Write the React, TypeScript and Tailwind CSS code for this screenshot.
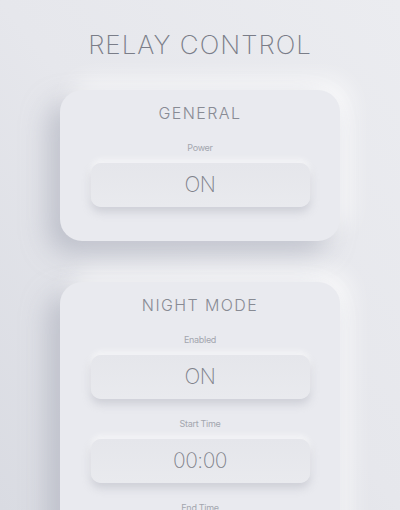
const fields = {
  general: [{ label: "Power", value: "ON" }],
  night: [
    { label: "Enabled", value: "ON" },
    { label: "Start Time", value: "00:00" },
    { label: "End Time", value: "06:00" },
  ],
};

function Field({ label, value, first }: { label: string; value: string; first?: boolean }) {
  return (
    <div className={first ? "mt-[18px]" : "mt-[19px]"}>
      <p className="text-center text-[9px] leading-[12px] text-[#a3a6ae] tracking-[-0.3px]">{label}</p>
      <button className="mx-auto mt-[9px] flex h-[44px] w-[219px] items-center justify-center rounded-[10px] bg-gradient-to-b from-[#e5e6eb] to-[#e9eaee] text-[21px] font-extralight tracking-[-0.5px] text-[#7e818a] shadow-[0_5px_9px_rgba(170,173,185,0.45),0_-3px_6px_rgba(255,255,255,0.7)]">
        {value}
      </button>
    </div>
  );
}

function Card({ title, items }: { title: string; items: { label: string; value: string }[] }) {
  return (
    <div className="w-[280px] rounded-[22px] bg-[#e9eaef] pt-[12px] pb-[34px] shadow-[-12px_12px_26px_rgba(160,164,178,0.55),10px_-10px_22px_rgba(255,255,255,0.75)]">
      <h2 className="text-center text-[16px] font-light leading-[22px] tracking-[1.4px] text-[#888b94]">
        {title}
      </h2>
      {items.map((f, i) => (
        <Field key={f.label} label={f.label} value={f.value} first={i === 0} />
      ))}
    </div>
  );
}

export default function App() {
  return (
    <div
      className="flex h-[510px] w-[400px] flex-col items-center overflow-hidden bg-gradient-to-tr from-[#d9dbe2] via-[#e6e7ec] to-[#ebecf0] pt-[30px]"
      style={{ fontFamily: '"Inter", "Liberation Sans", sans-serif' }}
    >
      <h1 className="text-[26px] font-extralight leading-[30px] tracking-[1px] text-[#7a7d88]">
        RELAY CONTROL
      </h1>
      <div className="mt-[30px] flex flex-col gap-[41px]">
        <Card title="GENERAL" items={fields.general} />
        <Card title="NIGHT MODE" items={fields.night} />
      </div>
    </div>
  );
}
